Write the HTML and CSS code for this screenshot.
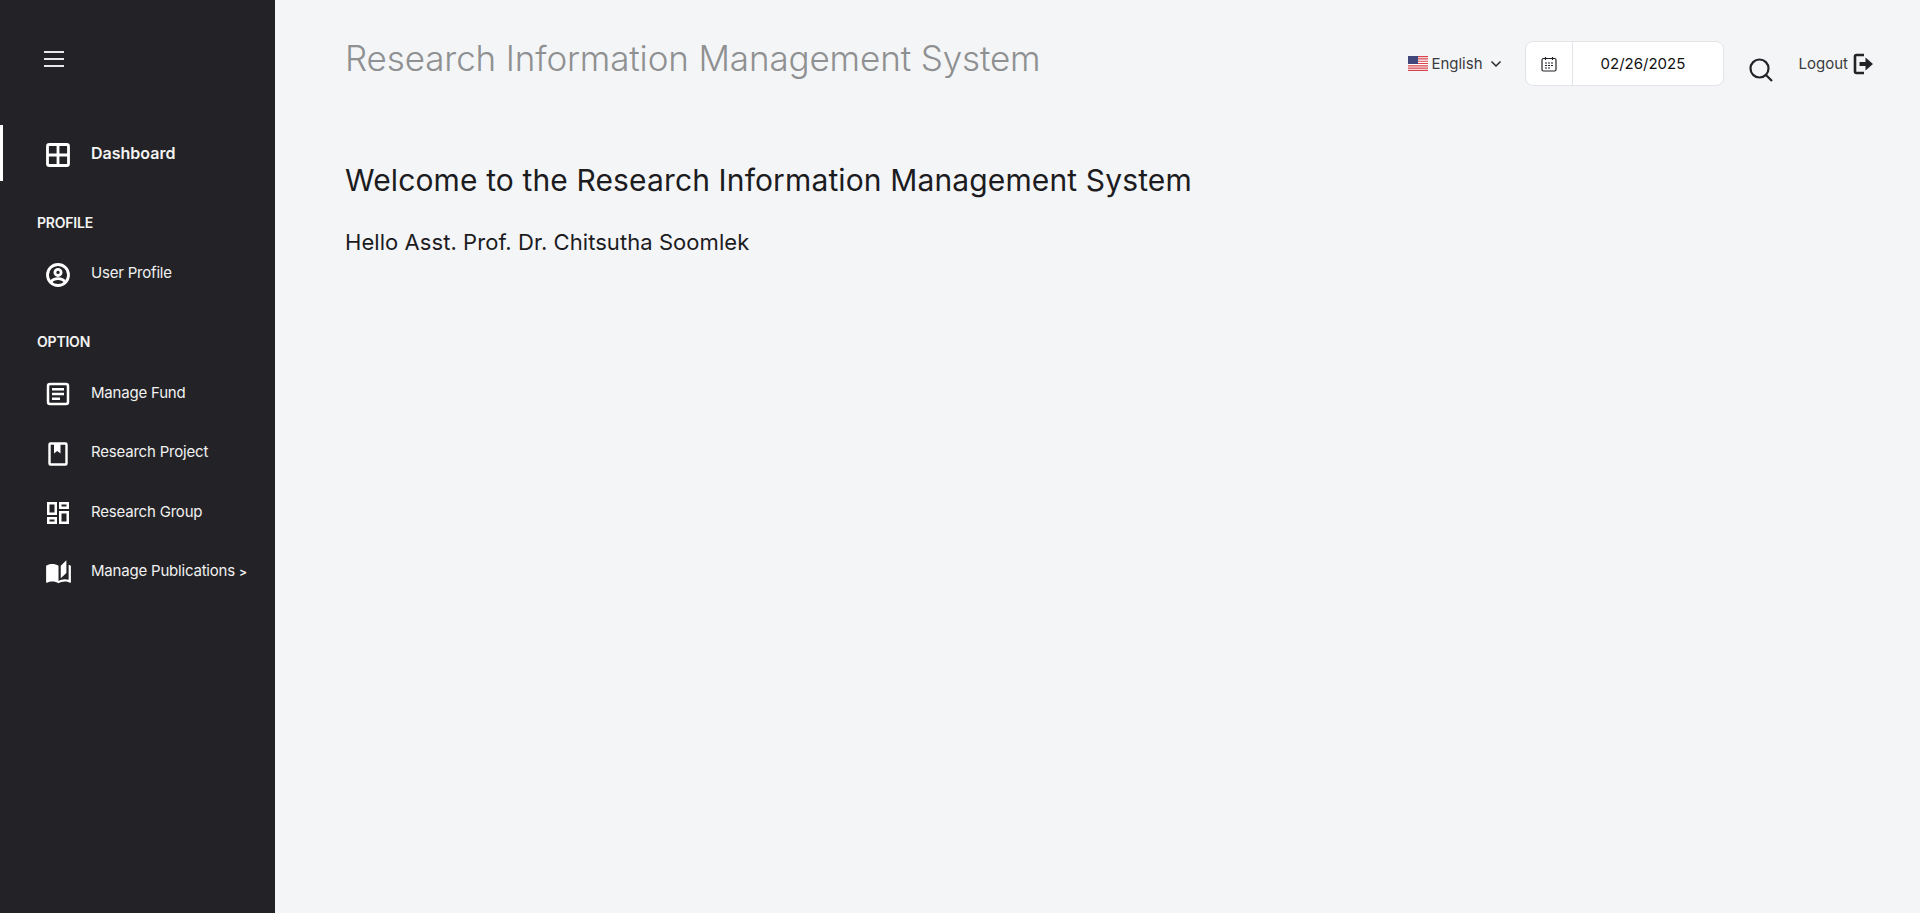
FILE: index.html
```html
<!DOCTYPE html>
<html lang="en">
<head>
<meta charset="utf-8">
<title>Research Information Management System</title>
<link rel="stylesheet" href="styles.css">
</head>
<body>
<div class="app">
  <aside class="sidebar">
    <button class="burger" aria-label="Menu"><span></span><span></span><span></span></button>
    <a class="item active">
      <svg class="ico" viewBox="0 0 24 24"><rect x="1.500" y="1.500" width="21" height="21" rx="1.800" fill="none" stroke="#fff" stroke-width="2.800"/><path d="M12 1v22M1 12h22" stroke="#fff" stroke-width="2.800"/></svg>
      <span>Dashboard</span>
    </a>
    <div class="section">PROFILE</div>
    <a class="item inter">
      <svg class="ico" viewBox="0 0 24 24"><circle cx="12" cy="12" r="10.500" fill="none" stroke="#fff" stroke-width="2.800"/><circle cx="12" cy="9.400" r="3.100" fill="none" stroke="#fff" stroke-width="2.800"/><path d="M4.800 19.200c1.600-2.400 4-3.500 7.200-3.500s5.600 1.100 7.200 3.500" fill="none" stroke="#fff" stroke-width="2.800"/></svg>
      <span>User Profile</span>
    </a>
    <div class="section second">OPTION</div>
    <a class="item">
      <svg class="ico" viewBox="0 0 24 24"><rect x="2" y="2" width="20" height="20" rx="2" fill="none" stroke="#fff" stroke-width="2.500"/><path d="M6 7.300h12M6 12h12M6 16.700h8" stroke="#fff" stroke-width="2.500"/></svg>
      <span>Manage Fund</span>
    </a>
    <a class="item">
      <svg class="ico" viewBox="0 0 24 24"><path fill="none" stroke="#fff" stroke-width="2.400" d="M4.500 1.500h15a1 1 0 0 1 1 1v19a1 1 0 0 1-1 1h-15a1 1 0 0 1-1-1v-19a1 1 0 0 1 1-1z"/><path fill="#fff" d="M8 2h6.500v9.500l-3.250-2.400L8 11.500z"/></svg>
      <span>Research Project</span>
    </a>
    <a class="item">
      <svg class="ico" viewBox="0 0 24 24"><path fill="#fff" fill-rule="evenodd" d="M1 1h10v13H1zM3.500 3.500v8h5v-8zM13 1h10v7H13zM15.500 3.500v2h5v-2zM13 10h10v13H13zM15.500 12.500v8h5v-8zM1 16h10v7H1zM3.500 18.500v2h5v-2z"/></svg>
      <span>Research Group</span>
    </a>
    <a class="item">
      <svg class="ico ico-wide" viewBox="0 0 24 24"><path fill="#fff" d="M19 1l-5 5v11l5-4.500V1m2 4v13.500c-1.100-.35-2.300-.5-3.500-.5-1.700 0-4.150.65-5.500 1.500V6C10.550 4.900 8.450 4.500 6.500 4.500S2.450 4.900 1 6v14.650c0 .25.25.5.5.5.1 0 .15-.05.25-.05C3.100 20.450 5.050 20 6.500 20c1.950 0 4.050.4 5.500 1.500 1.350-.85 3.800-1.500 5.500-1.500 1.650 0 3.350.3 4.750 1.050.1.05.15.05.25.05.25 0 .5-.25.5-.5V6c-.6-.45-1.250-.75-2-1z"/></svg>
      <span>Manage Publications <span class="more">&gt;</span></span>
    </a>
  </aside>
  <main class="main">
    <header class="topbar">
      <h1 class="title">Research Information Management System</h1>
      <div class="tools">
        <div class="lang">
          <svg class="flag" viewBox="0 0 20 15"><rect width="20" height="15" fill="#fff"/><path d="M0 .6h20M0 2.900h20M0 5.200h20M0 7.500h20M0 9.800h20M0 12.100h20M0 14.400h20" stroke="#d8434e" stroke-width="1.150"/><rect width="10" height="8" fill="#41477b"/></svg>
          <span>English</span>
          <svg class="chev" viewBox="0 0 12 8"><path d="M1.500 1.500 6 6l4.500-4.500" fill="none" stroke="#27272b" stroke-width="1.500"/></svg>
        </div>
        <div class="date">
          <div class="date-ico">
            <svg viewBox="0 0 16 16" width="16" height="16"><rect x="1" y="2.500" width="14" height="12.500" rx="1.500" fill="none" stroke="#232327" stroke-width="1.200"/><path d="M4.500 1v3M11.500 1v3" stroke="#232327" stroke-width="1.200"/><path d="M4 7h2M7 7h2M10 7h2M4 9.500h2M7 9.500h2M10 9.500h2M4 12h2M7 12h2" stroke="#232327" stroke-width="1.200"/></svg>
          </div>
          <div class="date-val">02/26/2025</div>
        </div>
        <svg class="search" viewBox="0 0 24 24"><circle cx="10.500" cy="10.500" r="9" fill="none" stroke="#232327" stroke-width="2.200"/><path d="M17 17l6 6" stroke="#232327" stroke-width="2.200"/></svg>
        <div class="logout">
          <span>Logout</span>
          <svg viewBox="0 0 20 22" width="20" height="22"><path d="M11 2H3.500A1.500 1.500 0 0 0 2 3.500v15A1.500 1.500 0 0 0 3.500 20H11" fill="none" stroke="#232327" stroke-width="2.600"/><path d="M6.500 9h6V4.500L20 11l-7.500 6.500V13h-6z" fill="#232327"/></svg>
        </div>
      </div>
    </header>
    <section class="content">
      <h2 class="welcome">Welcome to the Research Information Management System</h2>
      <p class="hello">Hello Asst. Prof. Dr. Chitsutha Soomlek</p>
    </section>
  </main>
</div>
</body>
</html>
```
FILE: styles.css
```css
* { box-sizing: border-box; }
html, body { margin: 0; height: 100%; }
body { font-family: Inter, "Liberation Sans", sans-serif; background: #f4f5f7; overflow: hidden; }
.app { display: flex; height: 913px; }
.sidebar { width: 275px; flex: none; background: #232327; color: #fff; padding-top: 48px; }
.burger { display: flex; flex-direction: column; justify-content: space-between; width: 20px; height: 16px; margin: 3px 0 0 44px; padding: 0; border: 0; background: none; }
.burger span { display: block; height: 2px; background: #e8e8e8; }
.item { display: flex; align-items: center; height: 59.500px; padding-left: 46px; gap: 21px; font-size: 15px; letter-spacing: -.2px; color: #f1f1f1; }
.item span { padding-bottom: 2px; }
.item .more { padding: 0; font-size: 12px; font-weight: 600; }
.ico { width: 24px; height: 24px; flex: none; margin-top: 2px; }
.ico-wide { width: 27px; height: 27px; margin: 2px -2px 0 -1px; }
.item.active { height: 56px; margin-top: 58px; border-left: 3px solid #fff; padding: 2px 0 0 43px; font-weight: 600; font-size: 16px; letter-spacing: 0; color: #f4f4f4; }
.section { font-size: 14px; font-weight: 600; padding-left: 37px; margin-top: 33px; height: 17px; line-height: 17px; color: #f4f4f4; letter-spacing: -.2px; }
.section.second { margin-top: 29px; }
.section + .item { margin-top: 13px; }
.section.second + .item { margin-top: 14px; }
.main { flex: 1; min-width: 0; padding: 0 47px 0 70px; }
.topbar { display: flex; justify-content: space-between; align-items: flex-start; }
.title { margin: 36px 0 0; font-size: 35px; line-height: 44px; font-weight: 300; color: #8f9091; letter-spacing: -.13px; }
.tools { display: flex; align-items: center; margin-top: 41px; }
.lang { display: flex; align-items: center; font-size: 15px; color: #3a3b40; }
.flag { width: 20px; height: 15px; margin-right: 3px; }
.chev { width: 12px; height: 8px; margin-left: 7px; }
.date { display: flex; width: 199px; height: 45px; margin-left: 23px; background: #fff; border: 1px solid #e3e4e8; border-radius: 8px; }
.date-ico { display: flex; align-items: center; justify-content: center; width: 47px; border-right: 1px solid #e3e4e8; }
.date-val { flex: 1; padding-left: 28px; line-height: 43px; font-size: 15px; color: #111; }
.search { width: 24px; height: 24px; margin: 13px 0 0 25px; }
.logout { display: flex; align-items: center; gap: 5px; margin-left: 26px; font-size: 15px; color: #3a3b40; }
.content { margin-top: 74px; }
.welcome { margin: 0; font-size: 30px; line-height: 40px; font-weight: 400; color: #1c1c1f; letter-spacing: .13px; }
.hello { margin: 27px 0 0; font-size: 22px; line-height: 30px; font-weight: 400; color: #1c1c1f; letter-spacing: .06px; }
```
